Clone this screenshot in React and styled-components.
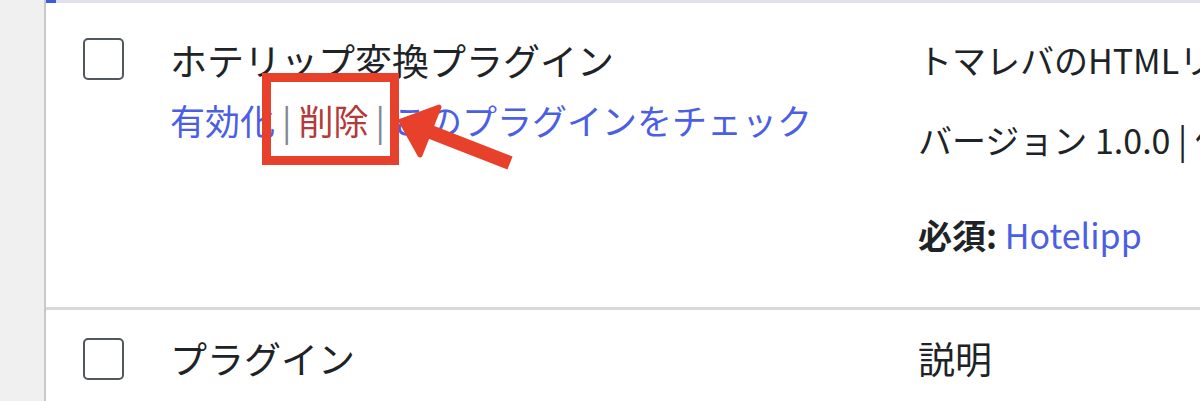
import React from "react";
import styled, { createGlobalStyle } from "styled-components";

const Global = createGlobalStyle`
  html, body { margin: 0; padding: 0; }
  body {
    width: 1200px;
    height: 401px;
    overflow: hidden;
    background: #f0f0f1;
    font-family: "Noto Sans CJK JP", "Noto Sans", sans-serif;
    color: #1d2327;
  }
`;

const Page = styled.div`
  position: relative;
  display: flex;
  width: 1200px;
  height: 401px;
`;

const Gutter = styled.div`
  width: 44px;
  flex: none;
  background: #f0f0f1;
`;

const Table = styled.div`
  flex: 1;
  min-width: 0;
  background: #fff;
  border-left: 2px solid #c8c8cb;
  display: flex;
  flex-direction: column;
  overflow: hidden;
`;

const TopEdge = styled.div`
  height: 3px;
  background: #e1e1f1;
  display: flex;
  &::before {
    content: "";
    width: 10px;
    background: #3d5ae0;
  }
`;

const Row = styled.div`
  display: grid;
  grid-template-columns: 124px 748px 1fr;
  padding-top: ${(p) => p.$pad}px;
  height: ${(p) => p.$h}px;
  box-sizing: border-box;
  white-space: nowrap;
`;

const Divider = styled.div`
  height: 3px;
  background: #d9d9dc;
`;

const CheckCell = styled.div`
  padding-left: 37px;
  padding-top: ${(p) => p.$top || 0}px;
`;

const Checkbox = styled.span`
  display: block;
  width: 37px;
  height: 38px;
  border: 2px solid #50575e;
  border-radius: 5px;
  background: #fff;
`;

const PluginCell = styled.div`
  display: flex;
  flex-direction: column;
`;

const Title = styled.div`
  font-size: 37px;
  line-height: 44px;
  color: #1d2327;
`;

const Actions = styled.div`
  margin-top: 16px;
  font-size: 35px;
  line-height: 44px;
  color: #8c8f94;
`;

const ActionLink = styled.a`
  color: ${(p) => (p.$danger ? "#b3393a" : "#4c5fe4")};
  text-decoration: none;
`;

const Sep = styled.span`
  color: #80858f;
  margin: 0 7px;
`;

const DescCell = styled.div`
  display: flex;
  flex-direction: column;
  overflow: hidden;
`;

const DescLine = styled.div`
  font-size: 34px;
  line-height: 44px;
  margin-top: ${(p) => p.$gap || 0}px;
  color: #1d2327;
`;

const Strong = styled.strong`
  font-weight: 700;
`;

const Link = styled.a`
  color: #4c5fe4;
  text-decoration: none;
`;

const HeadText = styled.div`
  font-size: 37px;
  line-height: 44px;
  color: #1d2327;
`;

/* red call-out around the delete action */
const Callout = styled.div`
  position: absolute;
  left: 262px;
  top: 73px;
  width: 137px;
  height: 92px;
  box-sizing: border-box;
  border: 9px solid #e8412b;
`;

const Pointer = styled.svg`
  position: absolute;
  left: 0;
  top: 0;
  pointer-events: none;
`;

export default function App() {
  return (
    <>
      <Global />
      <Page>
        <Gutter />
        <Table>
          <TopEdge />
          <Row $pad={35} $h={304}>
            <CheckCell>
              <Checkbox />
            </CheckCell>
            <PluginCell>
              <Title>ホテリップ変換プラグイン</Title>
              <Actions>
                <ActionLink href="#">有効化</ActionLink>
                <Sep>|</Sep>
                <ActionLink href="#" $danger>削除</ActionLink>
                <Sep>|</Sep>
                <ActionLink href="#">このプラグインをチェック</ActionLink>
              </Actions>
            </PluginCell>
            <DescCell>
              <DescLine>トマレバのHTMLリンクを変換します</DescLine>
              <DescLine $gap={36}>バージョン 1.0.0 | 作成者</DescLine>
              <DescLine $gap={51}>
                <Strong>必須:</Strong> <Link href="#">Hotelipp</Link>
              </DescLine>
            </DescCell>
          </Row>
          <Divider />
          <Row $pad={26} $h={91}>
            <CheckCell $top={2}>
              <Checkbox />
            </CheckCell>
            <HeadText>プラグイン</HeadText>
            <HeadText>説明</HeadText>
          </Row>
        </Table>
        <Callout />
        <Pointer width="1200" height="401" viewBox="0 0 1200 401">
          <line x1="428" y1="131" x2="510" y2="163" stroke="#e8412b" strokeWidth="14" />
          <polygon
            points="401,121 439,107 420,155"
            fill="#e8412b"
            stroke="#e8412b"
            strokeWidth="5"
            strokeLinejoin="round"
          />
        </Pointer>
      </Page>
    </>
  );
}
